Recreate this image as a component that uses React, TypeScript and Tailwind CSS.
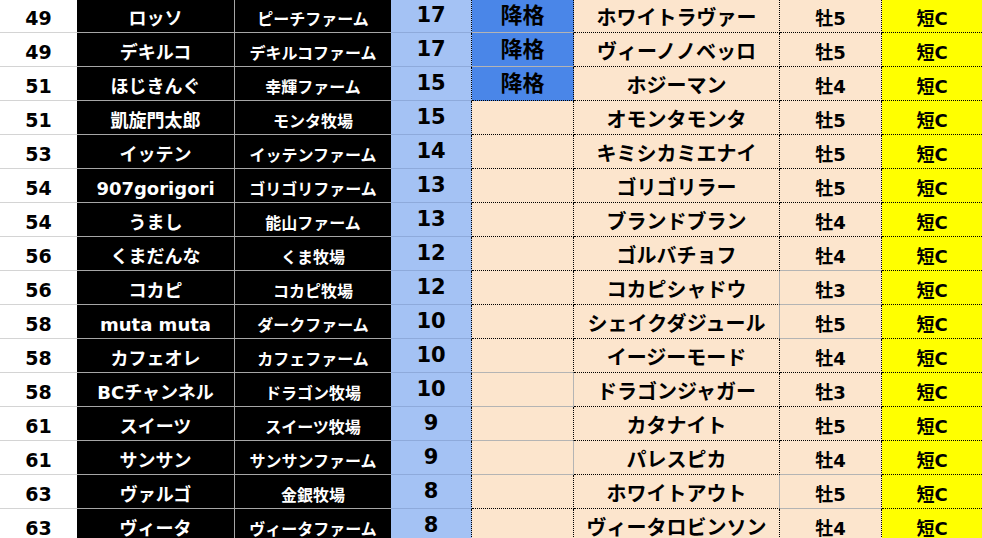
import React from "react";

type Row = {
  rank: string;
  name: string;
  farm: string;
  pts: string;
  demote: boolean;
  horse: string;
  sex: string;
};

const rows: Row[] = [
  { rank: "49", name: "ロッソ", farm: "ピーチファーム", pts: "17", demote: true, horse: "ホワイトラヴァー", sex: "牡5" },
  { rank: "49", name: "デキルコ", farm: "デキルコファーム", pts: "17", demote: true, horse: "ヴィーノノベッロ", sex: "牡5" },
  { rank: "51", name: "ほじきんぐ", farm: "幸輝ファーム", pts: "15", demote: true, horse: "ホジーマン", sex: "牡4" },
  { rank: "51", name: "凱旋門太郎", farm: "モンタ牧場", pts: "15", demote: false, horse: "オモンタモンタ", sex: "牡5" },
  { rank: "53", name: "イッテン", farm: "イッテンファーム", pts: "14", demote: false, horse: "キミシカミエナイ", sex: "牡5" },
  { rank: "54", name: "907gorigori", farm: "ゴリゴリファーム", pts: "13", demote: false, horse: "ゴリゴリラー", sex: "牡5" },
  { rank: "54", name: "うまし", farm: "能山ファーム", pts: "13", demote: false, horse: "ブランドブラン", sex: "牡4" },
  { rank: "56", name: "くまだんな", farm: "くま牧場", pts: "12", demote: false, horse: "ゴルバチョフ", sex: "牡4" },
  { rank: "56", name: "コカピ", farm: "コカピ牧場", pts: "12", demote: false, horse: "コカピシャドウ", sex: "牡3" },
  { rank: "58", name: "muta muta", farm: "ダークファーム", pts: "10", demote: false, horse: "シェイクダジュール", sex: "牡5" },
  { rank: "58", name: "カフェオレ", farm: "カフェファーム", pts: "10", demote: false, horse: "イージーモード", sex: "牡4" },
  { rank: "58", name: "BCチャンネル", farm: "ドラゴン牧場", pts: "10", demote: false, horse: "ドラゴンジャガー", sex: "牡3" },
  { rank: "61", name: "スイーツ", farm: "スイーツ牧場", pts: "9", demote: false, horse: "カタナイト", sex: "牡5" },
  { rank: "61", name: "サンサン", farm: "サンサンファーム", pts: "9", demote: false, horse: "パレスピカ", sex: "牡4" },
  { rank: "63", name: "ヴァルゴ", farm: "金銀牧場", pts: "8", demote: false, horse: "ホワイトアウト", sex: "牡5" },
  { rank: "63", name: "ヴィータ", farm: "ヴィータファーム", pts: "8", demote: false, horse: "ヴィータロビンソン", sex: "牡4" },
];

const col5BottomGray = [0, 1, 10, 11, 12, 13];
const col5RightGray = [11, 13];
const col6RightGray = [8, 9, 14];
const col7BottomGray = [7, 8, 9, 13, 14];

const RB_DOT = "border-r [border-right-style:dotted] border-r-black";
const RB_GRAY = "border-r [border-right-style:solid] border-r-[#b4b4b4]";
const BB_DOT = "border-b [border-bottom-style:dotted] border-b-black";
const BB_GRAY = "border-b [border-bottom-style:solid] border-b-[#b4b4b4]";

const font = "font-['DejaVu_Sans','Noto_Sans_CJK_JP',sans-serif] font-bold leading-none whitespace-nowrap";

export default function App() {
  return (
    <div className={`w-[982px] h-[538px] overflow-hidden bg-white ${font}`}>
      <div className="-mt-[1px] flex flex-col">
        {rows.map((r, i) => (
          <div key={i} className="flex h-[34px]">
            <div className="w-[77px] h-full flex items-center justify-center pt-[6px] text-[19px] text-black border-b border-b-[#d4d4d4]">
              {r.rank}
            </div>
            <div className="w-[158px] h-full flex items-center justify-center pt-[6px] text-[18px] text-white bg-black border-r border-r-[#a6a6a6] border-b border-b-[#a6a6a6]">
              {r.name}
            </div>
            <div className="w-[156px] h-full flex items-center justify-center pt-[8px] text-[16px] text-white bg-black border-b border-b-[#a6a6a6]">
              {r.farm}
            </div>
            <div className={`w-[81px] h-full flex items-center justify-center pt-[0px] text-[21px] text-black bg-[#a4c2f4] border-b border-b-[#8eaadb] ${RB_DOT}`}>
              {r.pts}
            </div>
            <div
              className={`w-[102px] h-full flex items-center justify-center pt-[0px] text-[22px] text-black ${
                r.demote ? "bg-[#4a86e8]" : "bg-[#fce5cd]"
              } ${col5BottomGray.includes(i) ? BB_GRAY : BB_DOT} ${col5RightGray.includes(i) ? RB_GRAY : RB_DOT}`}
            >
              {r.demote ? "降格" : ""}
            </div>
            <div
              className={`w-[206px] h-full flex items-center justify-center pt-[4px] text-[20px] text-black bg-[#fce5cd] ${BB_DOT} ${
                col6RightGray.includes(i) ? RB_GRAY : RB_DOT
              }`}
            >
              {r.horse}
            </div>
            <div
              className={`w-[102px] h-full flex items-center justify-center pt-[6px] text-[18px] text-black bg-[#fce5cd] ${RB_DOT} ${
                col7BottomGray.includes(i) ? BB_GRAY : BB_DOT
              }`}
            >
              {r.sex}
            </div>
            <div className={`w-[100px] h-full flex items-center justify-center pt-[6px] text-[18px] text-black bg-[#ffff00] ${BB_DOT}`}>
              短C
            </div>
          </div>
        ))}
      </div>
    </div>
  );
}
